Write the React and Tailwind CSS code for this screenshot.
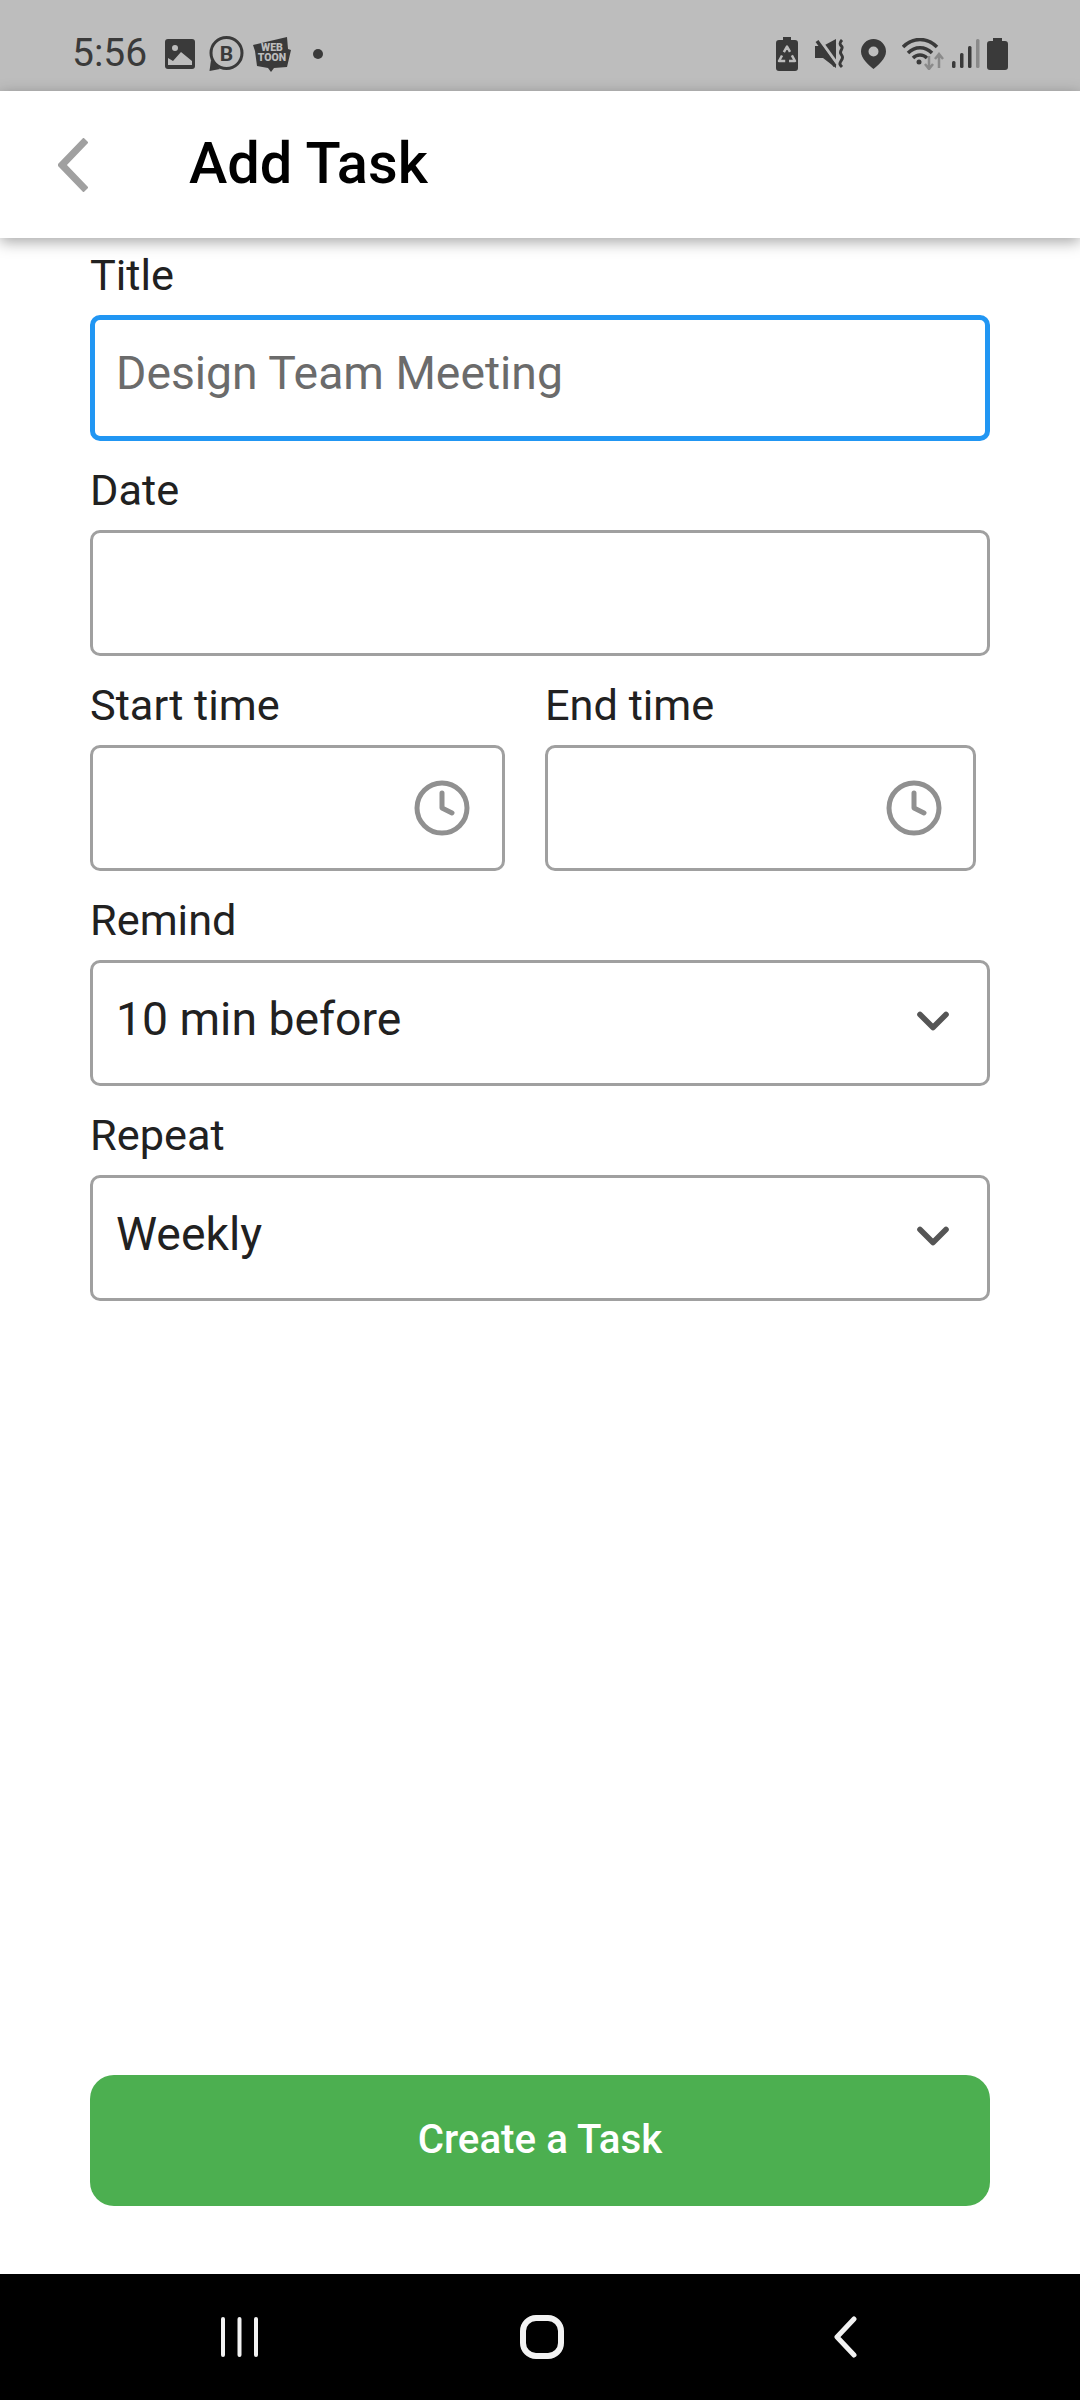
import React from 'react';
import { ChevronDown, Clock } from 'lucide-react';

function Field({ label, children, className = '' }) {
    return (
        <div className={className}>
            <p className="text-[43.3px] leading-[50px] text-[#212121] mb-[14px]">{label}</p>
            {children}
        </div>
    );
}

function Box({ children, focused }) {
    return (
        <div
            className={`h-[126px] rounded-[10px] bg-white flex items-center justify-between ${focused ? 'border-[5px] border-[#2196f3] pl-[21px] pb-[8px]' : 'border-[3px] border-[#a0a0a0] pl-[23px] pb-[6px]'}`}
        >
            {children}
        </div>
    );
}

function TimeBox({ right }) {
    return (
        <Box>
            <span />
            <Clock className={`w-[60px] h-[60px] text-[#909090] mt-[6px] ${right}`} strokeWidth={2} />
        </Box>
    );
}

function SelectBox({ value }) {
    return (
        <Box>
            <span className="text-[46.3px] text-[#212121]">{value}</span>
            <ChevronDown className="w-[52px] h-[52px] text-[#555555] mr-[28px] mt-[2px]" strokeWidth={2.6} />
        </Box>
    );
}

function StatusLeft() {
    return (
        <div className="flex items-center text-[#3a3a3a]">
            <span className="text-[39px] mr-[18px]">5:56</span>
            <svg width="30" height="30" viewBox="0 0 30 30" className="mr-[13px]">
                <rect width="30" height="30" rx="3" fill="#3a3a3a" />
                <circle cx="10" cy="9" r="3" fill="#bdbdbd" />
                <path d="M3 26V19l5 3 8-9 11 9v4z" fill="#bdbdbd" />
            </svg>
            <svg width="36" height="36" viewBox="0 0 36 36" className="mr-[9px]">
                <circle cx="18.5" cy="17" r="15.5" fill="none" stroke="#3a3a3a" strokeWidth="3" />
                <path d="M1.500 35l1.500-11 9 9z" fill="#3a3a3a" />
                <text x="18.5" y="24.500" textAnchor="middle" fontFamily="Roboto" fontWeight="700" fontSize="21" fill="#3a3a3a">B</text>
            </svg>
            <svg width="38" height="38" viewBox="0 0 38 38">
                <path d="M0 10l34-8 1 12 3 1-4 17-13 1-3 4-3-4-11-2-2-15z" fill="#3a3a3a" />
                <text x="19" y="16" textAnchor="middle" fontFamily="Roboto" fontWeight="900" fontSize="10.500" fill="#bdbdbd">WEB</text>
                <text x="19" y="25.500" textAnchor="middle" fontFamily="Roboto" fontWeight="900" fontSize="10.500" fill="#bdbdbd">TOON</text>
            </svg>
            <span className="w-[10px] h-[10px] rounded-full bg-[#3a3a3a] ml-[22px]" />
        </div>
    );
}

function StatusRight() {
    return (
        <div className="flex items-center">
            <svg width="22" height="34" viewBox="0 0 22 34" className="mr-[17px]">
                <path d="M7 0h8v3h4a3 3 0 0 1 3 3v25a3 3 0 0 1-3 3H3a3 3 0 0 1-3-3V6a3 3 0 0 1 3-3h4z" fill="#3a3a3a" />
                <path d="M11 9.500L19 24H3z" fill="none" stroke="#bdbdbd" strokeWidth="2.500" strokeDasharray="12.500 3.800" strokeDashoffset="6.250" strokeLinejoin="round" />
            </svg>
            <svg width="30" height="30" viewBox="0 0 30 30" className="mr-[16px]">
                <path d="M0 7h8L21 0v29L8 19H0z" fill="#3a3a3a" />
                <path d="M5 1l18 25" stroke="#bdbdbd" strokeWidth="3" />
                <path d="M2 2l18 25" stroke="#3a3a3a" strokeWidth="3.500" />
                <path d="M27 1c-4 4-1 5 0 7s-3 4-1 7 2 4 0 7-1 4 1 6" fill="none" stroke="#3a3a3a" strokeWidth="3" />
            </svg>
            <svg width="25" height="30" viewBox="0 0 25 30" className="mr-[16px]">
                <path fillRule="evenodd" d="M12.500 0A12.500 12.500 0 0 1 25 12.500C25 20 17 26 12.500 30 8 26 0 20 0 12.500A12.500 12.500 0 0 1 12.500 0zm0 7.500a5 5 0 1 0 0 10 5 5 0 0 0 0-10z" fill="#3a3a3a" />
            </svg>
            <svg width="42" height="32" viewBox="0 0 42 32" className="mr-[8px]">
                <path d="M1 9c10-10 24-10 34 0M6 15c7-7 17-7 24 0M11 20c4-4 10-4 14 0" fill="none" stroke="#3a3a3a" strokeWidth="3.500" />
                <circle cx="17" cy="24" r="2.500" fill="#3a3a3a" />
                <path d="M27 18v12M23 26l4 5 4-5" fill="none" stroke="#8a8a8a" strokeWidth="2.500" />
                <path d="M37 30V17M33 21l4-5 4 5" fill="none" stroke="#8a8a8a" strokeWidth="2.500" />
            </svg>
            <svg width="28" height="30" viewBox="0 0 28 30" className="mr-[7px]">
                <rect x="0" y="22" width="3.5" height="7" rx="1.500" fill="#3a3a3a" />
                <rect x="8" y="14" width="3.5" height="15" rx="1.500" fill="#3a3a3a" />
                <rect x="16" y="7" width="3.5" height="22" rx="1.500" fill="#3a3a3a" />
                <rect x="24" y="0" width="3.5" height="29" rx="1.500" fill="#8a8a8a" />
            </svg>
            <svg width="21" height="32" viewBox="0 0 21 32">
                <path d="M6 0h9v3h3a3 3 0 0 1 3 3v23a3 3 0 0 1-3 3H3a3 3 0 0 1-3-3V6a3 3 0 0 1 3-3h3z" fill="#3a3a3a" />
            </svg>
        </div>
    );
}

export default function App() {
    return (
        <div className="h-[2400px] w-[1080px] flex flex-col bg-white overflow-hidden" style={{ fontFamily: 'Roboto, sans-serif' }}>
            {/* Status bar */}
            <div className="h-[91px] shrink-0 bg-[#bdbdbd] flex items-center justify-between pl-[72px] pr-[72px] pt-[16px]">
                <StatusLeft />
                <StatusRight />
            </div>

            {/* Header */}
            <header className="relative z-10 h-[147px] shrink-0 bg-white flex items-center pl-[58px] shadow-[0_4px_14px_rgba(0,0,0,0.35)]">
                <svg width="30" height="54" viewBox="0 0 30 54" className="mr-[101px]">
                    <path d="M28 2L4 27l24 25" fill="none" stroke="#a0a0a0" strokeWidth="7" />
                </svg>
                <h1 className="text-[57.75px] font-medium text-black mb-[2px]">Add Task</h1>
            </header>

            {/* Form */}
            <main className="flex-1 flex flex-col justify-between px-[90px] pt-[13px] pb-[68px]">
                <div className="flex flex-col gap-[25px]">
                    <Field label="Title">
                        <Box focused>
                            <span className="text-[46.3px] text-[#6b6b6b]">Design Team Meeting</span>
                        </Box>
                    </Field>
                    <Field label="Date">
                        <Box />
                    </Field>
                    <div className="flex gap-[40px]">
                        <Field label="Start time" className="w-[415px]">
                            <TimeBox right="mr-[30px]" />
                        </Field>
                        <Field label="End time" className="w-[431px]">
                            <TimeBox right="mr-[29px]" />
                        </Field>
                    </div>
                    <Field label="Remind">
                        <SelectBox value="10 min before" />
                    </Field>
                    <Field label="Repeat">
                        <SelectBox value="Weekly" />
                    </Field>
                </div>
                <button className="h-[131px] rounded-[24px] bg-[#4caf50] text-white text-[40.3px] font-medium">Create a Task</button>
            </main>

            {/* Nav bar */}
            <nav className="h-[126px] shrink-0 bg-black flex items-center pl-[221px]">
                <svg width="38" height="40" viewBox="0 0 38 40" className="mr-[261px]">
                    <path d="M2 2v36M18.500 2v36M35 2v36" stroke="#f2f2f2" strokeWidth="4" strokeLinecap="round" />
                </svg>
                <svg width="44" height="44" viewBox="0 0 44 44" className="mr-[269px]">
                    <rect x="3" y="3" width="38" height="38" rx="13" fill="none" stroke="#f2f2f2" strokeWidth="6" />
                </svg>
                <svg width="24" height="42" viewBox="0 0 24 42">
                    <path d="M21 3L4 21l17 18" fill="none" stroke="#f2f2f2" strokeWidth="5" strokeLinecap="round" strokeLinejoin="round" />
                </svg>
            </nav>
        </div>
    );
}
